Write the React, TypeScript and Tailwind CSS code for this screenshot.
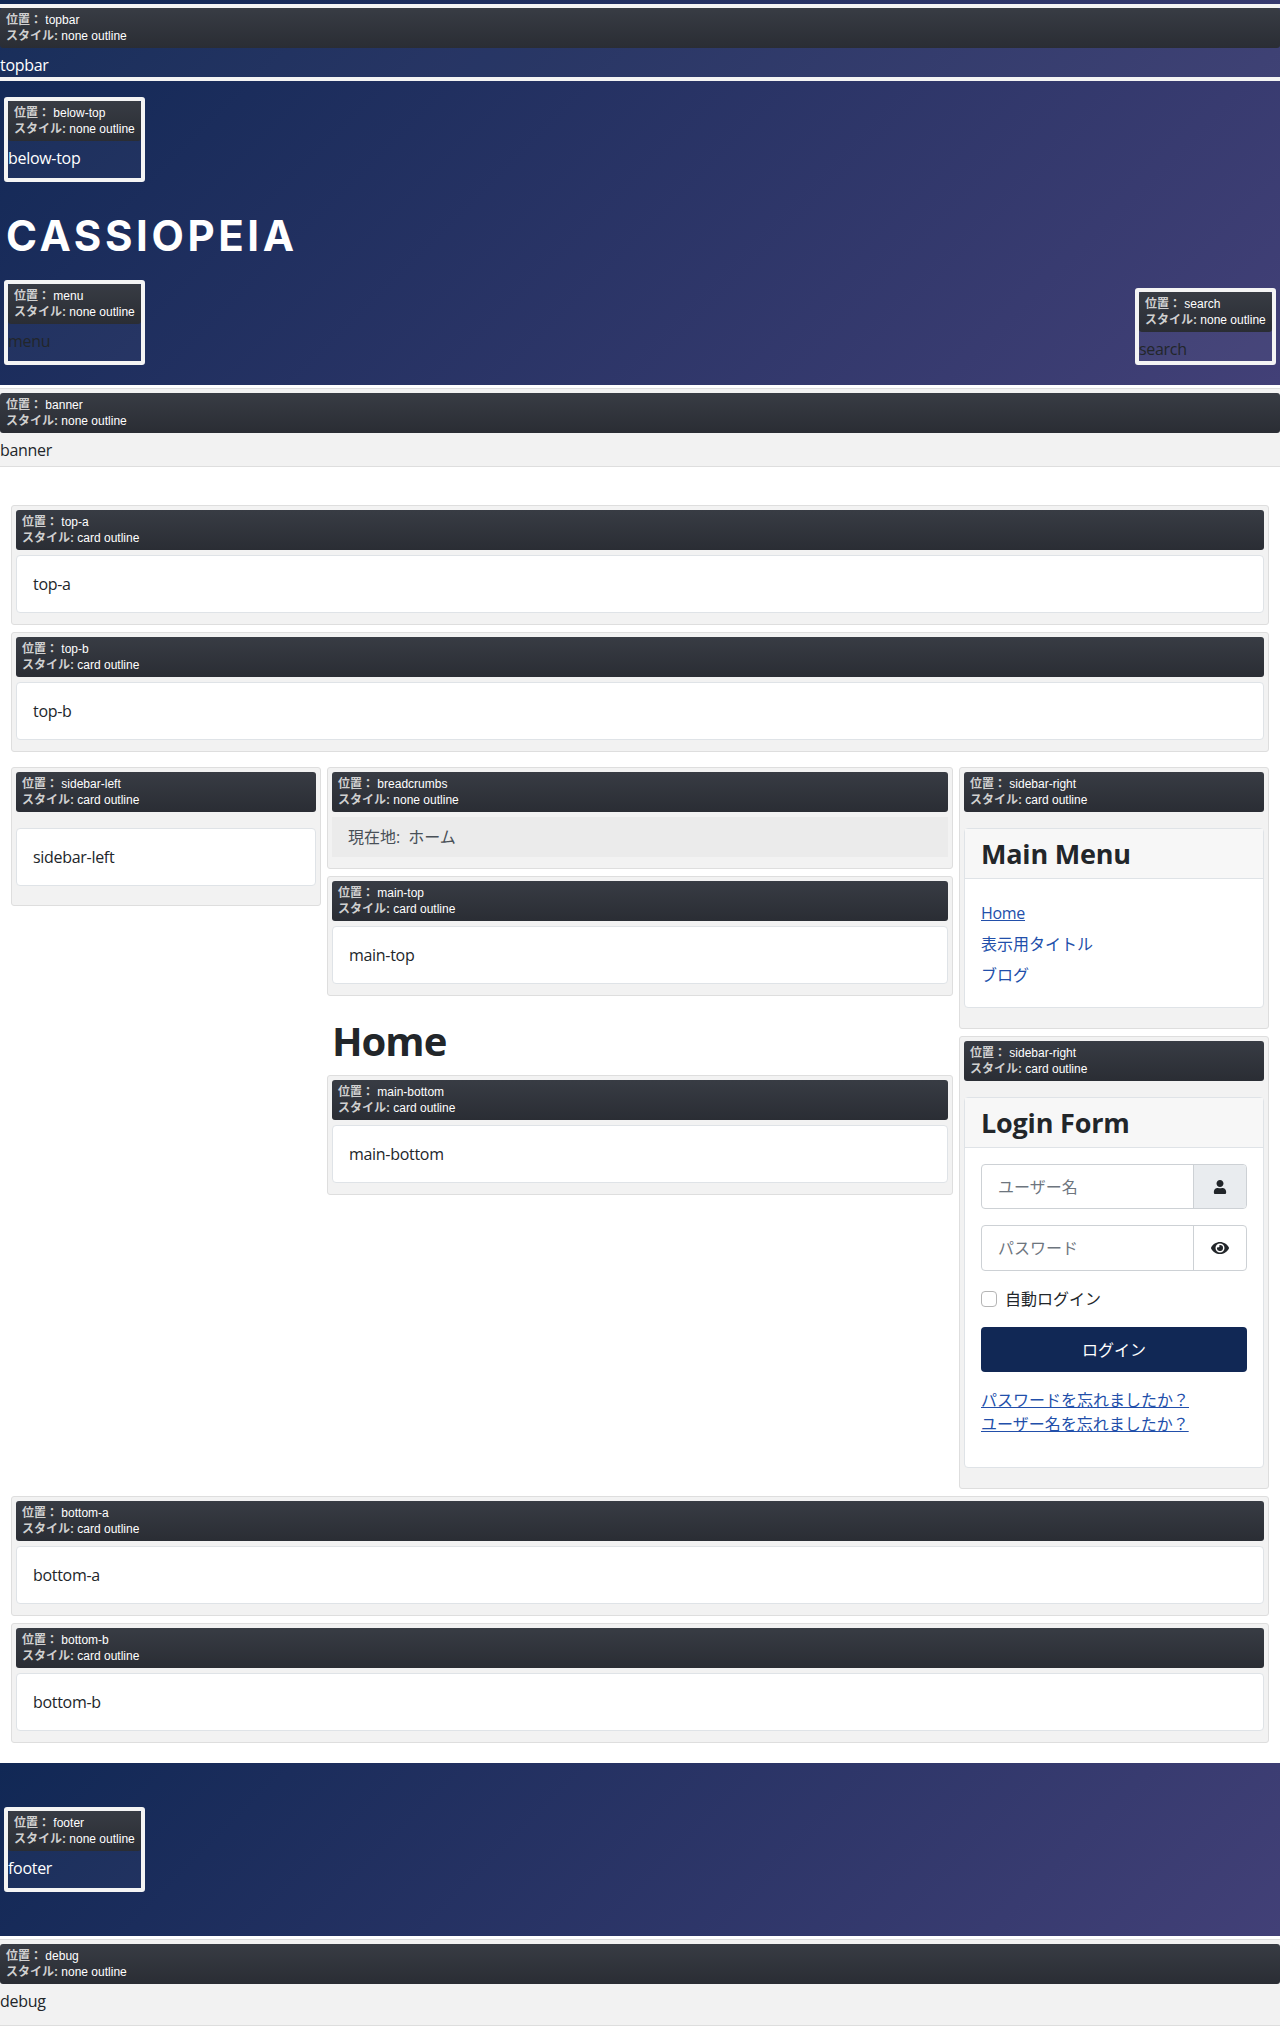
import type { ReactNode } from 'react'
import { FaEye, FaUser } from 'react-icons/fa'

const BODY_FONT = "font-['Open_Sans','Noto_Sans_CJK_JP',sans-serif]"

function Label({ pos, style }: { pos: string; style: string }) {
  return (
    <div className="h-10 rounded-[3px] bg-gradient-to-b from-[#383c44] to-[#2a2d34] px-[6px] py-1 font-['Liberation_Sans','Noto_Sans_CJK_JP',sans-serif] text-xs leading-4 tracking-normal text-white">
      <div><b className="text-[#d0d0d0]">位置：</b> {pos}</div>
      <div><b className="text-[#d0d0d0]">スタイル:</b> {style}</div>
    </div>
  )
}

// white framed preview used inside the header and footer
function Outline({ pos, text, dark, tall }: { pos: string; text: string; dark?: boolean; tall?: boolean }) {
  return (
    <div className="w-[141px] rounded-[3px] border-4 border-[#f4f4f4] bg-white/[0.03]">
      <Label pos={pos} style="none outline" />
      <div className={`mt-[5px] leading-6 tracking-[-0.3px] ${tall ? 'mb-2' : ''} ${dark ? 'text-[#22262a]' : 'text-white'}`}>{text}</div>
    </div>
  )
}

function Box({ pos, style = 'card outline', children }: { pos: string; style?: string; children: ReactNode }) {
  return (
    <div className="mb-[7px] rounded-[3px] border border-[#dedede] bg-[#f2f2f2] p-1">
      <Label pos={pos} style={style} />
      {children}
    </div>
  )
}

function SimpleCard({ text, spaced }: { text: string; spaced?: boolean }) {
  return (
    <div className={`${spaced ? 'mt-4 mb-[15px]' : 'mt-[5px] mb-[7px]'} rounded-[4px] border border-[#dfe3e7] bg-white p-4 leading-6 tracking-[-0.3px]`}>
      {text}
    </div>
  )
}

function Card({ title, children }: { title: string; children: ReactNode }) {
  return (
    <div className="mt-4 mb-4 rounded-[4px] border border-[#dfe3e7] bg-white">
      <h3 className="h-[50px] border-b border-[#dfe3e7] bg-[#f7f7f7] px-4 text-[27px] leading-[50px] font-bold tracking-[-0.2px] text-[#22262a]">{title}</h3>
      {children}
    </div>
  )
}

function Bar({ pos, text, last }: { pos: string; text: string; last?: boolean }) {
  return (
    <div className="mt-[3px] border-y border-[#dedede] bg-[#f2f2f2] pt-1">
      <Label pos={pos} style="none outline" />
      <div className={`mt-[5px] leading-6 tracking-[-0.3px] ${last ? 'mb-3' : 'mb-1'}`}>{text}</div>
    </div>
  )
}

export default function App() {
  return (
    <div className={`${BODY_FONT} min-h-[2029px] bg-white text-base text-[#22262a]`}>
      {/* header */}
      <header className="h-[385px] bg-[linear-gradient(135deg,#112855_0%,#424077_100%)] pt-1">
        <div className="border-y-4 border-[#f4f4f4] bg-white/[0.03]">
          <Label pos="topbar" style="none outline" />
          <div className="mt-[5px] leading-6 tracking-[-0.3px] text-white">topbar</div>
        </div>
        <div className="mt-4 ml-1">
          <Outline pos="below-top" text="below-top" tall />
        </div>
        <div className="mt-[38px] mb-7 ml-[6px] font-['Inter',sans-serif] text-[42px] leading-8 font-bold tracking-[3.6px] text-white">CASSIOPEIA</div>
        <div className="flex items-end justify-between px-1">
          <Outline pos="menu" text="menu" dark tall />
          <Outline pos="search" text="search" dark />
        </div>
      </header>

      <Bar pos="banner" text="banner" />

      {/* top modules */}
      <div className="px-[11px] pt-[38px]">
        <Box pos="top-a"><SimpleCard text="top-a" /></Box>
        <Box pos="top-b"><SimpleCard text="top-b" /></Box>
      </div>

      {/* three columns */}
      <div className="mt-[15px] flex gap-[6px] px-[11px]">
        <aside className="w-[310px] shrink-0">
          <Box pos="sidebar-left"><SimpleCard text="sidebar-left" spaced /></Box>
        </aside>

        <main className="min-w-0 flex-1">
          <Box pos="breadcrumbs" style="none outline">
            <div className="mt-[5px] mb-[7px] flex h-10 items-center gap-2 bg-[#ebebeb] px-4 text-[#495057]">
              <span>現在地:</span>
              <span>ホーム</span>
            </div>
          </Box>
          <Box pos="main-top"><SimpleCard text="main-top" /></Box>
          <h1 className="mt-[21px] mb-[10px] pl-[5px] text-[40px] leading-[48px] font-bold tracking-[-1px] text-[#22262a]">Home</h1>
          <Box pos="main-bottom"><SimpleCard text="main-bottom" /></Box>
        </main>

        <aside className="w-[310px] shrink-0">
          <Box pos="sidebar-right">
            <Card title="Main Menu">
              <ul className="space-y-[7px] px-4 pt-[22px] pb-5 leading-6 text-[#224faa]">
                <li><a className="tracking-[-0.3px] underline">Home</a></li>
                <li><a>表示用タイトル</a></li>
                <li><a>ブログ</a></li>
              </ul>
            </Card>
          </Box>
          <Box pos="sidebar-right">
            <Card title="Login Form">
              <div className="px-4 pt-4 pb-[31px]">
                <div className="flex h-[45px] overflow-hidden rounded-[4px] border border-[#cdd1d5]">
                  <div className="flex flex-1 items-center pl-4 text-[#6d757e]">ユーザー名</div>
                  <div className="flex w-[53px] items-center justify-center border-l border-[#cdd1d5] bg-[#e9ecef]">
                    <FaUser className="text-[14px] text-[#22262a]" />
                  </div>
                </div>
                <div className="mt-4 flex h-[46px] overflow-hidden rounded-[4px] border border-[#cdd1d5]">
                  <div className="flex flex-1 items-center pl-4 text-[#6d757e]">パスワード</div>
                  <div className="flex w-[53px] items-center justify-center border-l border-[#cdd1d5]">
                    <FaEye className="text-[18px] text-[#22262a]" />
                  </div>
                </div>
                <label className="mt-5 flex h-4 items-center gap-2">
                  <span className="h-4 w-4 rounded-[4px] border border-[#b5b5b5] bg-white" />
                  <span>自動ログイン</span>
                </label>
                <button className="mt-5 h-[45px] w-full rounded-[4px] bg-[#112855] text-white">ログイン</button>
                <div className="mt-4 flex flex-col items-start leading-6 text-[#224faa]">
                  <a className="underline">パスワードを忘れましたか？</a>
                  <a className="underline">ユーザー名を忘れましたか？</a>
                </div>
              </div>
            </Card>
          </Box>
        </aside>
      </div>

      {/* bottom modules */}
      <div className="px-[11px]">
        <Box pos="bottom-a"><SimpleCard text="bottom-a" /></Box>
        <Box pos="bottom-b"><SimpleCard text="bottom-b" /></Box>
      </div>

      {/* footer */}
      <footer className="mt-5 h-[173px] bg-[linear-gradient(135deg,#112855_0%,#424077_100%)] pt-11 pl-1">
        <Outline pos="footer" text="footer" tall />
      </footer>

      <Bar pos="debug" text="debug" last />
    </div>
  )
}
